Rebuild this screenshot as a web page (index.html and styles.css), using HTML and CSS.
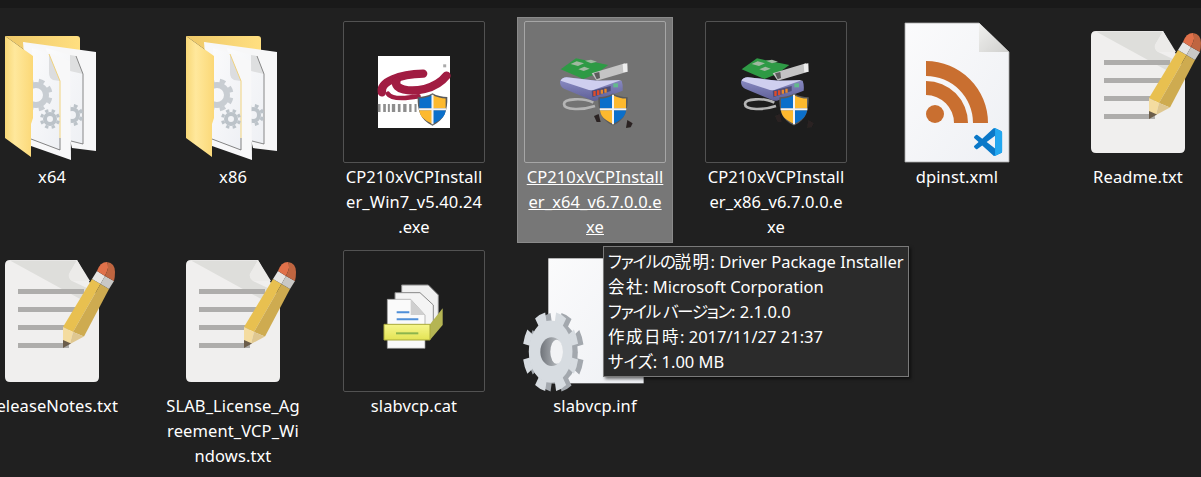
FILE: index.html
```html
<!DOCTYPE html>
<html lang="ja">
<head>
<meta charset="utf-8">
<title>CP210x</title>
<link rel="stylesheet" href="styles.css">
</head>
<body>
<svg class="defs" width="0" height="0" aria-hidden="true">
  <defs>
    <linearGradient id="flap" x1="0" x2="1" y1="0" y2="0"><stop offset="0" stop-color="#f8d877"/><stop offset=".35" stop-color="#ffe89c"/><stop offset="1" stop-color="#fbd877"/></linearGradient>
    <linearGradient id="backf" x1="0" x2="1" y1="0" y2="0"><stop offset="0" stop-color="#eec868"/><stop offset="1" stop-color="#ffdf80"/></linearGradient>
    <linearGradient id="paper" x1="0" x2="1" y1="0" y2="1"><stop offset="0" stop-color="#fbfbfc"/><stop offset="1" stop-color="#eef0f4"/></linearGradient>
    <linearGradient id="fold" x1="0" x2="1" y1="0" y2="1"><stop offset="0" stop-color="#f1f1ef"/><stop offset="1" stop-color="#cfcfcd"/></linearGradient>
    <linearGradient id="hole" x1="0" x2="1" y1="0" y2="0"><stop offset="0" stop-color="#70747a"/><stop offset="1" stop-color="#c8ccd0"/></linearGradient>
    <linearGradient id="tray" x1="0" x2="0" y1="0" y2="1"><stop offset="0" stop-color="#f6f68c"/><stop offset="1" stop-color="#e3e354"/></linearGradient>
    <linearGradient id="body" x1="0" x2="0" y1="0" y2="1"><stop offset="0" stop-color="#8d8ec6"/><stop offset="1" stop-color="#5f6098"/></linearGradient>
    <filter id="soft" x="-10%" y="-10%" width="120%" height="120%"><feGaussianBlur stdDeviation="1.7"/></filter>

    <symbol id="shield" viewBox="0 0 90 98">
      <path d="M45 1 C58 9 74 12 89 12 C90 50 82 80 45 97 C8 80 0 50 1 12 C16 12 32 9 45 1Z" fill="#5a5a5a"/>
      <path d="M45 6 C58 13 72 16 84 16 L84 45 L45 45Z" fill="#fdb92e"/>
      <path d="M45 6 C32 13 18 16 6 16 L6 45 L45 45Z" fill="#0b6fca"/>
      <path d="M6 51 L45 51 L45 92 C16 78 8 68 6 51Z" fill="#fdb92e"/>
      <path d="M84 51 L45 51 L45 92 C74 78 82 68 84 51Z" fill="#0b6fca"/>
      <path d="M42 5 H48 V93 H42Z M5 45 H85 V51 H5Z" fill="#f4f4f4"/>
    </symbol>

    <symbol id="folder" viewBox="0 0 142 142" overflow="visible">
      <g transform="translate(19 -21)">
        <path d="M5 36 H77 Q80 36 80 39 V52 L33 56Z" fill="url(#backf)"/>
        <path d="M23 42 L96 52 V151 L72 148 L60 100Z" fill="#f7f7f8"/>
        <path d="M46 48 L70 55 L76 56 L83 74 V144 L66 141Z" fill="url(#paper)"/>
        <path d="M70 55 L76 56 L83 74 L70 71Z" fill="#dedfe0"/>
        <path d="M76 56 L83 74 V144 L71 141" fill="none" stroke="#6d6d6d" stroke-width=".8"/>
        <g transform="translate(72 115)">
          <circle r="6" fill="none" stroke="#bcc3c9" stroke-width="4"/>
          <circle r="9.500" fill="none" stroke="#bcc3c9" stroke-width="3.200" pathLength="8" stroke-dasharray=".5 .5" stroke-dashoffset="-.25"/>
        </g>
        <path d="M23 42 L70 61 L71 160 L31 146Z" fill="#f8f8f9"/>
        <path d="M32 48 L49 54 L60 81 V150 L31 139Z" fill="url(#paper)"/>
        <path d="M49 54 L60 81 L53 80 Q49 78 49 73Z" fill="#dcdddf"/>
        <path d="M49 54 L60 81 V138" fill="none" stroke="#f1cf71" stroke-width=".9"/>
        <path d="M31 139 L60 150 V138" fill="none" stroke="#666" stroke-width=".8"/>
        <g transform="translate(36 95)">
          <circle r="10" fill="none" stroke="#c8cdd2" stroke-width="6"/>
          <circle r="14.500" fill="none" stroke="#c8cdd2" stroke-width="4" pathLength="8" stroke-dasharray=".5 .5" stroke-dashoffset="-.25"/>
        </g>
        <g transform="translate(50 119)">
          <circle r="5" fill="none" stroke="#bcc3c9" stroke-width="4"/>
          <circle r="8.500" fill="none" stroke="#bcc3c9" stroke-width="3" pathLength="8" stroke-dasharray=".5 .5" stroke-dashoffset="-.25"/>
        </g>
        <path d="M5 36 L33 56 V118 L31 124 V157 L5 138Z" fill="url(#flap)"/>
      </g>
    </symbol>

    <symbol id="device" viewBox="0 0 142 142" overflow="visible">
      <g transform="translate(16 19) scale(.3333)" filter="url(#soft)">
        <path d="M62 88 L108 55 L205 75 L168 102 L130 117Z" fill="#2f9a45"/>
        <path d="M92 72 l18 -8 l22 6 l-18 8Z M135 62 l18 -3 l18 6 l-18 5Z M115 88 l18 -8 l16 6 l-18 7Z" fill="#9fb8a0"/>
        <path d="M155 100 L255 70 L262 95 L170 122Z" fill="#c4c4c4"/>
        <path d="M162 100 L178 96 L180 114 L170 118Z" fill="#5c5c5c"/>
        <path d="M248 72 L262 70 L263 95 L250 97Z" fill="#ededed"/>
        <path d="M60 126 Q62 114 80 112 L170 122 L245 122 Q250 135 248 152 L168 182 Q158 184 148 178 L72 146 Q60 140 60 126Z" fill="url(#body)"/>
        <path d="M62 122 Q66 113 80 112 L170 122 L244 120 L160 150 Q150 152 140 148Z" fill="#cfcfef"/>
        <path d="M155 152 L212 138 L212 153 L157 172Z" fill="#4d4d78"/>
        <path d="M160 153 h7 v15 h-7Z M171 151 h7 v14 h-7Z" fill="#dd4b2c"/>
        <path d="M182 149 h7 v12 h-7Z M193 146 h7 v12 h-7Z" fill="#e98a2d"/>
        <path d="M220 130 h14 v12 h-14Z" fill="#64ba8c"/>
        <path d="M160 188 C130 172 72 176 72 192 C72 212 130 210 165 198" fill="none" stroke="#b5b5b5" stroke-width="8"/>
        <path d="M162 228 L176 222 L182 246 L170 246Z M262 240 L278 250 L272 262 L258 264Z" fill="#2a2422"/>
      </g>
      <use href="#shield" x="74" y="72" width="30" height="33"/>
    </symbol>

    <symbol id="silabs" viewBox="0 0 142 142" overflow="visible">
      <rect x="35" y="35" width="72" height="72" fill="#fff"/>
      <g transform="translate(-3.8 -12) scale(.3333)" filter="url(#soft)">
        <g fill="none" stroke="#a11a42" stroke-linecap="round">
          <path d="M128 250 C122 218 180 196 252 194" stroke-width="25"/>
          <path d="M172 216 C162 242 212 250 256 240 C284 233 308 218 322 200" stroke-width="25"/>
          <path d="M146 254 C156 270 192 270 238 262" stroke-width="14"/>
        </g>
        <path d="M116 285h8v24h-8zM132 285h8v24h-8zM146 285h6v24h-6zM158 285h10v24h-10zM176 285h8v24h-8zM192 285h10v24h-10zM210 285h7v24h-7zM226 285h6v24h-6z" fill="#8e8e8e"/>
        <path d="M312 166h9v9h-9z" fill="#aaa"/>
      </g>
      <use href="#shield" x="74" y="72" width="31" height="33"/>
    </symbol>

    <symbol id="xml" viewBox="0 0 142 142" overflow="visible">
      <g transform="translate(-886 -21)">
        <path d="M905 23 H979 L1009 52 V162 H905Z" fill="url(#paper)" stroke="#a9a9a9" stroke-width=".8"/>
        <path d="M979 23 L1009 52 H979Z" fill="url(#fold)"/>
        <path d="M926 61 A62 62 0 0 1 988 123 H973 A47 47 0 0 0 926 76Z M926 81 A42 42 0 0 1 968 123 H954 A28 28 0 0 0 926 95Z" fill="#c96f30"/>
        <circle cx="935" cy="114" r="9" fill="#c96f30"/>
        <g transform="translate(974 128) scale(1.17)">
          <path d="M23.15 2.587L18.21.21a1.494 1.494 0 0 0-1.705.29l-9.46 8.63-4.12-3.128a.999.999 0 0 0-1.276.057L.327 7.261A1 1 0 0 0 .326 8.74L3.899 12 .326 15.26a1 1 0 0 0 .001 1.479L1.65 17.94a.999.999 0 0 0 1.276.057l4.12-3.128 9.46 8.63a1.492 1.492 0 0 0 1.704.29l4.942-2.377A1.5 1.5 0 0 0 24 20.06V3.939a1.5 1.5 0 0 0-.85-1.352zm-5.146 14.861L10.826 12l7.178-5.448v10.896z" fill="#0a78c8"/>
          <path d="M16.5.5 Q17.3 -.1 18.21.21 L23.15 2.587 A1.5 1.5 0 0 1 24 3.94 V20.06 A1.5 1.5 0 0 1 23.15 21.41 L18.21 23.8 Q17.3 24.1 16.5 23.5 Q18 23.9 18 22.5 V1.5 Q18 .1 16.5 .5Z" fill="#22a7f0"/>
        </g>
      </g>
    </symbol>

    <symbol id="note" viewBox="0 0 142 142" overflow="visible">
      <g transform="translate(-1067 -21)">
        <path d="M1096 31 H1163 L1185 70 V148 Q1185 153 1180 153 H1096 Q1091 153 1091 148 V36 Q1091 31 1096 31Z" fill="#f0efee"/>
        <path d="M1096 31.5 H1163 L1155 45 Q1154 49 1158 52 L1175 60 L1168 71Z" fill="#dededb"/>
        <path d="M1163 31 L1155 45 Q1154 50 1159 52 L1176 52Z" fill="#ecebe9"/>
        <path d="M1104 60 H1170 V65 H1104Z M1104 78 H1165 V83 H1104Z M1104 96 H1160 V101 H1104Z M1104 114 H1155 V119 H1104Z" fill="#aeadab"/>
        <path d="M1149 98 L1178 50 L1186.5 55 L1159 103Z" fill="#e8c050"/>
        <path d="M1159 103 L1186.5 55 L1195 60 L1170 107.500Z" fill="#ceab50"/>
        <path d="M1149 98 L1159 103 L1156 115 L1149 112Z" fill="#f4dca0"/>
        <path d="M1159 103 L1170 107.500 L1156 115Z" fill="#dfc790"/>
        <path d="M1149 111 L1157 114.500 L1149 119Z" fill="#6b5d4a"/>
        <path d="M1178 50 L1183 42 L1191 47 L1186.500 55Z" fill="#e6e5e3"/>
        <path d="M1191 47 L1200 52 L1195 60 L1186.500 55Z" fill="#c9c8c5"/>
        <path d="M1183 42 Q1186 33 1193 33 Q1196 37 1191 47Z" fill="#e0714a"/>
        <path d="M1191 47 Q1196 37 1193 33 Q1201 34 1201 43 Q1201 48 1200 52Z" fill="#bf6540"/>
      </g>
    </symbol>

    <symbol id="catalog" viewBox="0 0 142 142" overflow="visible">
      <g transform="translate(27 30) scale(.3333)" filter="url(#soft)">
        <path d="M95 15 H175 L205 45 V135 H95Z" fill="#f0f0f0" stroke="#888" stroke-width="3"/>
        <path d="M75 38 H150 L190 75 V150 H75Z" fill="#f4f4f4" stroke="#888" stroke-width="3"/>
        <path d="M52 58 H122 L165 105 V205 H52Z" fill="#fafafa" stroke="#999" stroke-width="2"/>
        <path d="M122 58 L165 105 H122Z" fill="#cfcfcf"/>
        <path d="M80 94 H118 V100 H80Z M80 115 H145 V121 H80Z" fill="#4f8fd8"/>
        <path d="M180 133 L218 85 V135 L180 180Z" fill="#b5b552"/>
        <path d="M42 133 H180 V180 H42Z" fill="url(#tray)" stroke="#a9a93c" stroke-width="3"/>
        <path d="M78 157 H145 V163 H78Z" fill="#8cb44e"/>
      </g>
    </symbol>

    <symbol id="setup" viewBox="0 0 142 142" overflow="visible">
      <g transform="translate(-184 -10) scale(.3333)">
        <rect x="625" y="55" width="286" height="375" fill="url(#paper)"/>
        <g transform="translate(648 337) scale(.84 1.2)">
          <circle r="78" fill="#a3a8ae"/>
          <circle r="88" fill="none" stroke="#a3a8ae" stroke-width="24" pathLength="8" stroke-dasharray=".5 .5" stroke-dashoffset="-.25"/>
        </g>
        <g transform="translate(632 335) scale(.84 1.2)">
          <circle r="78" fill="#d7dce1"/>
          <circle r="88" fill="none" stroke="#d7dce1" stroke-width="24" pathLength="8" stroke-dasharray=".5 .5" stroke-dashoffset="-.25"/>
        </g>
        <ellipse cx="635" cy="335" rx="34" ry="43" fill="url(#hole)"/>
        <ellipse cx="650" cy="335" rx="19" ry="36" fill="#f2f3f5"/>
      </g>
    </symbol>
  </defs>
</svg>

<div class="topbar"></div>
<main class="grid">
  <div class="item"><div class="thumb"><svg class="icon"><use href="#folder"/></svg></div><div class="label">x64</div></div>
  <div class="item"><div class="thumb"><svg class="icon"><use href="#folder"/></svg></div><div class="label">x86</div></div>
  <div class="item"><div class="thumb framed"><svg class="icon"><use href="#silabs"/></svg></div><div class="label">CP210xVCPInstall<br>er_Win7_v5.40.24<br>.exe</div></div>
  <div class="item selected"><div class="thumb framed"><svg class="icon"><use href="#device"/></svg></div><div class="label">CP210xVCPInstall<br>er_x64_v6.7.0.0.e<br>xe</div></div>
  <div class="item"><div class="thumb framed"><svg class="icon"><use href="#device"/></svg></div><div class="label">CP210xVCPInstall<br>er_x86_v6.7.0.0.e<br>xe</div></div>
  <div class="item"><div class="thumb"><svg class="icon"><use href="#xml"/></svg></div><div class="label">dpinst.xml</div></div>
  <div class="item"><div class="thumb"><svg class="icon"><use href="#note"/></svg></div><div class="label">Readme.txt</div></div>
  <div class="item"><div class="thumb"><svg class="icon"><use href="#note"/></svg></div><div class="label">ReleaseNotes.txt</div></div>
  <div class="item"><div class="thumb"><svg class="icon"><use href="#note"/></svg></div><div class="label">SLAB_License_Ag<br>reement_VCP_Wi<br>ndows.txt</div></div>
  <div class="item"><div class="thumb framed"><svg class="icon"><use href="#catalog"/></svg></div><div class="label">slabvcp.cat</div></div>
  <div class="item"><div class="thumb"><svg class="icon"><use href="#setup"/></svg></div><div class="label">slabvcp.inf</div></div>
</main>
<div class="tooltip">
  <div><span class="kana">ファイルの</span><span class="kanji">説明</span>: Driver Package Installer</div>
  <div><span class="kanji">会社</span>: Microsoft Corporation</div>
  <div><span class="kana">ファイル バージョン</span>: 2.1.0.0</div>
  <div><span class="kanji">作成日時</span>: 2017/11/27 21:37</div>
  <div>サイズ: 1.00 MB</div>
</div>
</body>
</html>
```

FILE: styles.css
```css
* { box-sizing: border-box; }
html, body { margin: 0; height: 100%; }
body {
  position: relative;
  height: 477px;
  overflow: hidden;
  background: #202020;
  color: #fff;
  font-family: "Noto Sans", "Noto Sans CJK JP", sans-serif;
  font-size: 16.5px;
}
.defs { position: absolute; }
.topbar { height: 8px; background: #191919; }
.grid {
  display: grid;
  grid-template-columns: repeat(7, 156px);
  grid-auto-rows: 226px;
  column-gap: 25px;
  row-gap: 3px;
  margin: 9px 0 0 -26px;
}
.item {
  display: flex;
  flex-direction: column;
  align-items: center;
  padding: 3px 6px 0;
  border: 1px solid transparent;
}
.item.selected {
  background: #777;
  border-color: #8a8a8a;
}
.thumb {
  flex: none;
  width: 142px;
  height: 142px;
  border: 1px solid transparent;
  border-radius: 2px;
}
.thumb.framed { border-color: #525252; background: #1d1d1d; }
.selected .thumb.framed { border-color: #a6a6a6; background: #737373; }
.icon {
  display: block;
  width: 142px;
  height: 142px;
  margin: -1px;
  overflow: visible;
}
.label {
  margin-top: 1px;
  line-height: 25px;
  letter-spacing: .1px;
  text-align: center;
  white-space: nowrap;
}
.selected .label { text-decoration: underline; }
.tooltip {
  position: absolute;
  left: 603px;
  top: 246px;
  width: 306px;
  height: 131px;
  padding: 2px 4px;
  background: #2b2b2b;
  border: 1px solid #7a7a7a;
  box-shadow: 2px 2px 3px rgba(0, 0, 0, .55);
  line-height: 25px;
  white-space: nowrap;
  font-feature-settings: "palt";
}
.kanji { letter-spacing: 1.5px; }
.kana { letter-spacing: -1.3px; }
```
